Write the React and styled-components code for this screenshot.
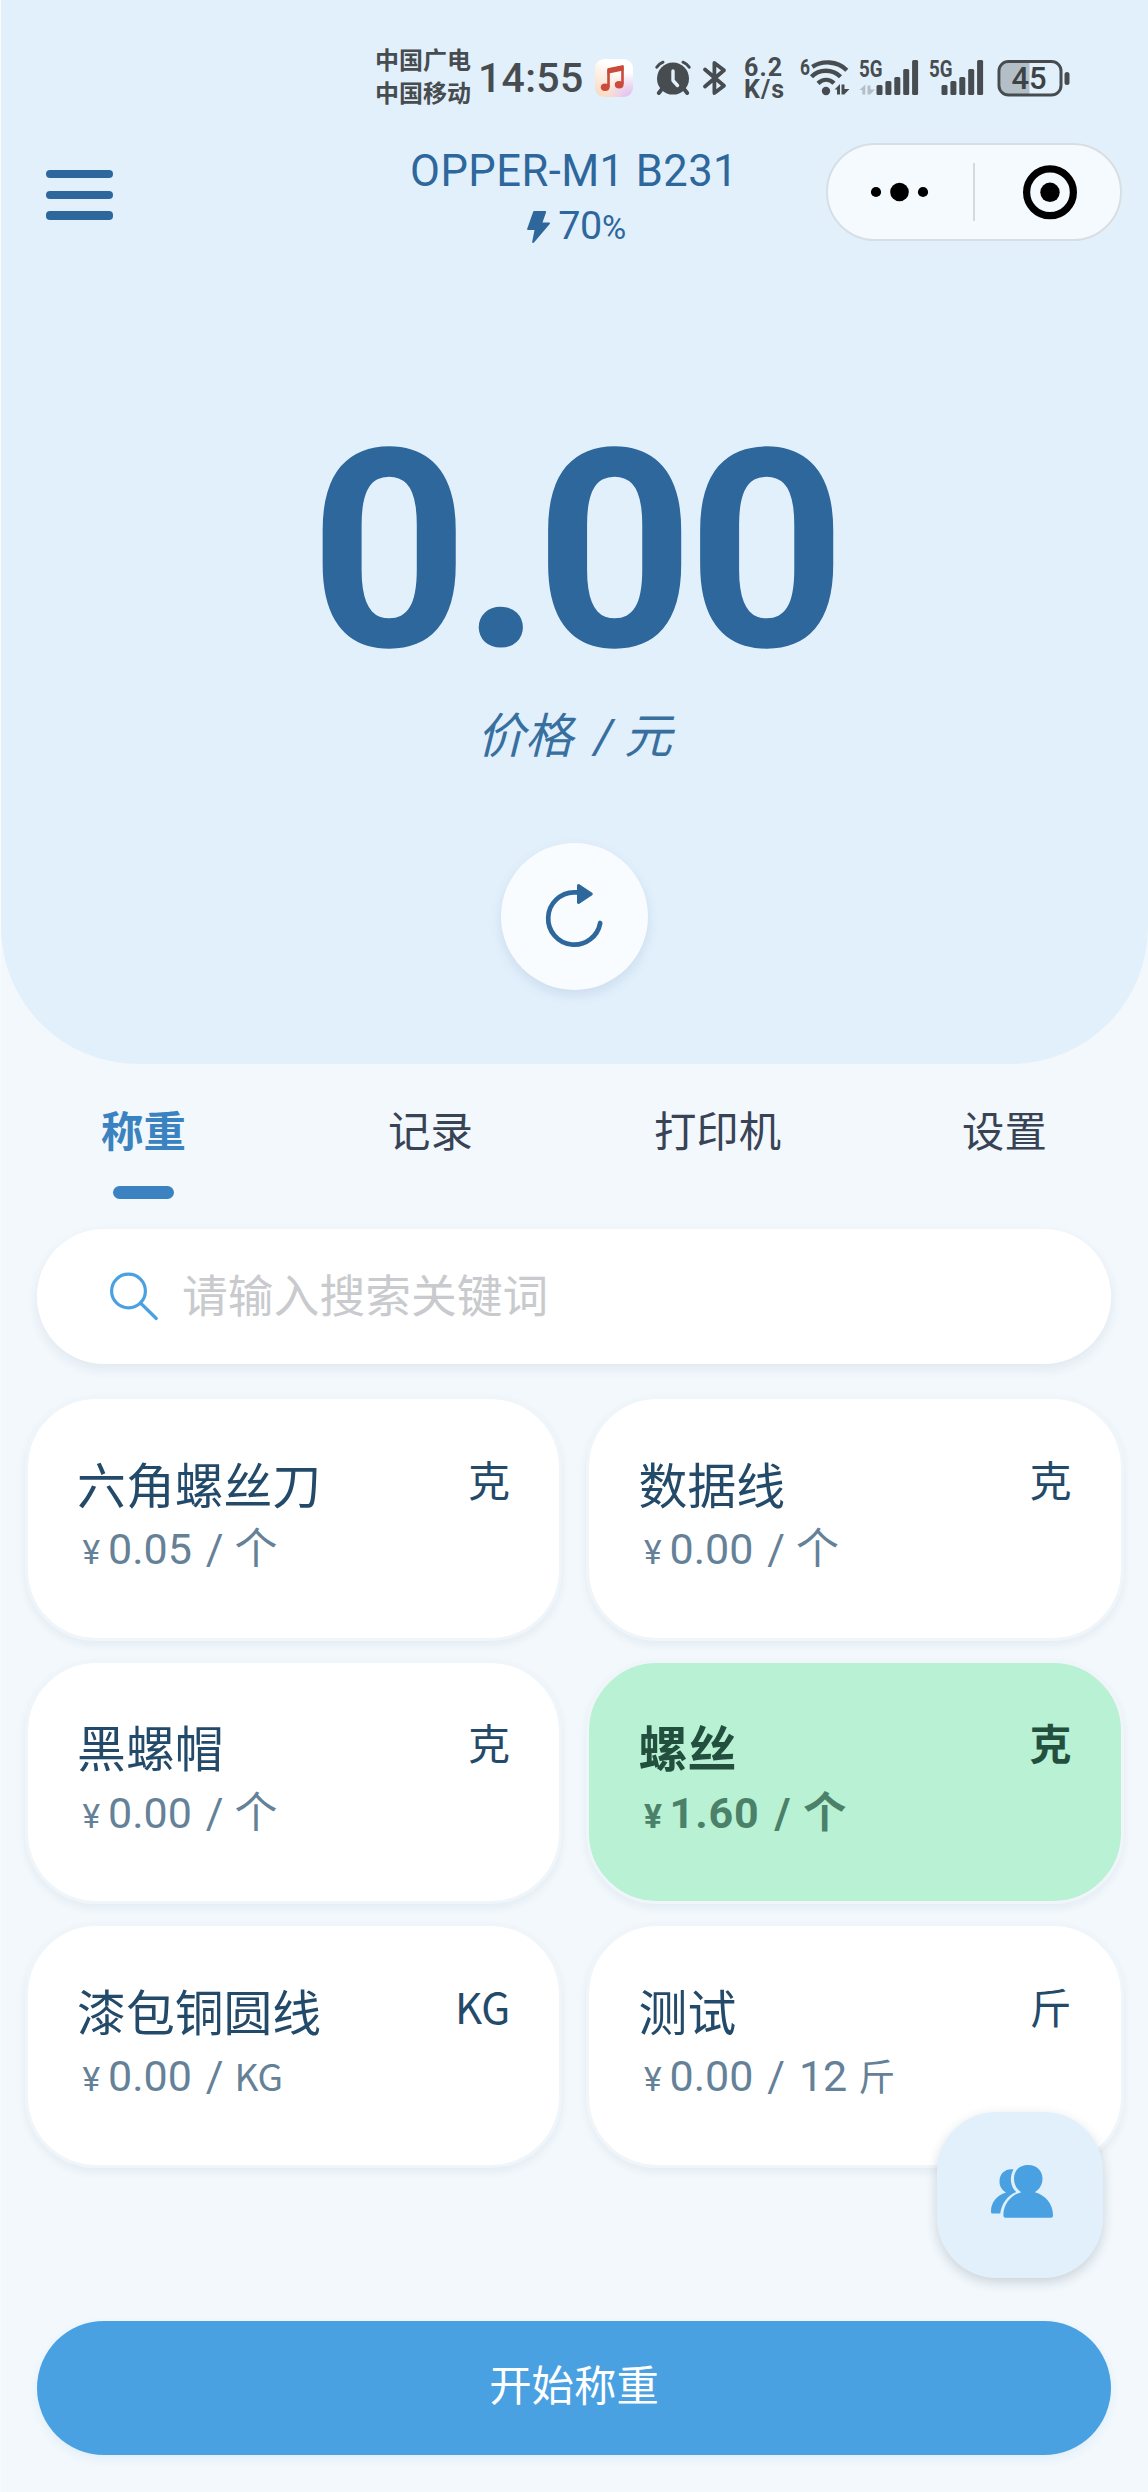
import React from 'react';
import styled, { createGlobalStyle, css } from 'styled-components';

const GlobalStyle = createGlobalStyle`
    * {
        box-sizing: border-box;
    }
    body {
        margin: 0;
        background: #f2f8fd;
        font-family: Roboto, "Noto Sans CJK SC", sans-serif;
    }
`

const Page = styled.div`
    position: relative;
    display: flex;
    flex-direction: column;
    width: 1148px;
    height: 2492px;
    overflow: hidden;
    border-left: 1px solid #f7fbfe;
    background: #f2f8fc;
`

const Hero = styled.header`
    display: flex;
    flex-direction: column;
    align-items: center;
    height: 1064px;
    background: #e2f0fc;
    border-radius: 0 0 137px 137px;
`

const StatusBar = styled.div`
    display: flex;
    align-items: center;
    width: 100%;
    height: 118px;
    padding: 38px 0 0 374px;
    color: #464c4f;
    svg {
        display: block;
        flex: none;
        overflow: visible;
    }
`

const StatusGap = styled.span`
    flex: none;
    width: ${({ $width }) => $width}px;
`

const Carrier = styled.div`
    width: 103px;
    font-size: 24px;
    font-weight: 700;
    line-height: 33px;
    white-space: nowrap;
`

const Clock = styled.div`
    width: 117px;
    font-size: 41px;
    font-weight: 500;
    letter-spacing: 0.3px;
    line-height: 48px;
`

const Speed = styled.div`
    width: 56px;
    margin-left: 17px;
    padding-top: 1px;
    font-size: 25px;
    font-weight: 700;
    letter-spacing: 1.1px;
    line-height: 22px;
`

const NavBar = styled.div`
    display: grid;
    grid-template-columns: 321px 504px 322px;
    width: 100%;
    height: 148px;
`

const MenuButton = styled.button`
    display: flex;
    flex-direction: column;
    gap: 12.3px;
    width: 67px;
    margin: 52px 0 0 45px;
    padding: 0;
    border: 0;
    background: none;
    span {
        height: 8.4px;
        border-radius: 4px;
        background: #2d679b;
    }
`

const Device = styled.div`
    padding-top: 28.5px;
    color: #2d679b;
    text-align: center;
    h1 {
        margin: 0;
        font-size: 43.5px;
        font-weight: 400;
        line-height: 50px;
        letter-spacing: 0.45px;
    }
`

const Battery = styled.div`
    display: flex;
    align-items: center;
    justify-content: center;
    gap: 8px;
    margin-top: 4.5px;
    padding-left: 5px;
    font-size: 39.5px;
    line-height: 50px;
    letter-spacing: -0.3px;
    small {
        font-size: 33px;
    }
`

const Capsule = styled.div`
    width: 296px;
    height: 98px;
    margin-top: 25px;
    border: 2px solid #d7dfe5;
    border-radius: 49px;
    background: #f5fafe;
    svg {
        display: block;
    }
`

const Reading = styled.div`
    margin-top: 123.5px;
    color: #2d679b;
    font-size: 277px;
    font-weight: 700;
    line-height: 324px;
    letter-spacing: -6.9px;
`

const ReadingLabel = styled.div`
    margin-top: -11.5px;
    color: #376f9f;
    font-size: 48px;
    font-style: italic;
    line-height: 70px;
    word-spacing: 4px;
    span {
        margin: 0 -5px 0 5px;
    }
`

const RefreshButton = styled.button`
    width: 147px;
    height: 147px;
    margin-top: 71px;
    padding: 0;
    border: 0;
    border-radius: 50%;
    background: #f8fcff;
    box-shadow: 0 5px 12px rgba(60, 90, 130, 0.13);
    svg {
        display: block;
    }
`

const Tabs = styled.nav`
    display: grid;
    grid-template-columns: repeat(4, 287px);
    height: 165px;
    margin-left: -1px;
    padding-top: 38px;
`

const Tab = styled.a`
    display: flex;
    flex-direction: column;
    align-items: center;
    color: ${({ $active }) => ($active ? '#3a82c0' : '#394356')};
    font-size: 42.4px;
    font-weight: ${({ $active }) => ($active ? 700 : 400)};
    line-height: 62px;
    &::after {
        content: "";
        display: ${({ $active }) => ($active ? 'block' : 'none')};
        width: 61px;
        height: 13px;
        margin-top: 22px;
        border-radius: 6.5px;
        background: #3a82c0;
    }
`

const SearchBox = styled.label`
    display: flex;
    align-items: center;
    gap: 23px;
    height: 135px;
    margin: 0 37px 0 36px;
    padding-left: 72px;
    border-radius: 67px;
    background: #fff;
    box-shadow: 0 5px 12px rgba(50, 80, 110, 0.09);
    input {
        flex: 1;
        padding: 1px 0 0;
        border: 0;
        outline: 0;
        background: none;
        font-family: inherit;
        font-size: 45.8px;
    }
    input::placeholder {
        color: #c8cacd;
        opacity: 1;
    }
`

const Goods = styled.main`
    display: grid;
    grid-template-columns: 537.5px 537.5px;
    grid-auto-rows: 244.7px;
    gap: 19px 24px;
    margin: 32px 0 0 23.6px;
`

const selectedCard = css`
    background: #b8f1d3;
    color: #234f3f;
    font-weight: 700;
`

const Card = styled.article`
    padding: 53.5px 49px 0 49.5px;
    border: 3px solid #f0f5fa;
    border-radius: 71px;
    background: #fff;
    background-clip: padding-box;
    box-shadow: 0 4px 8px rgba(50, 80, 110, 0.07);
    color: #244a6a;
    ${({ $selected }) => $selected && selectedCard}
`

const CardTop = styled.div`
    display: flex;
    justify-content: space-between;
    height: 67.5px;
    h2 {
        margin: 0;
        font-size: 48.8px;
        font-weight: inherit;
        line-height: 70px;
    }
    span {
        margin-top: -5px;
        font-family: "Noto Sans CJK SC", sans-serif;
        font-size: 42px;
        line-height: 62px;
    }
`

const Price = styled.div`
    display: flex;
    align-items: baseline;
    color: ${({ $selected }) => ($selected ? '#4b8069' : '#648198')};
    font-size: 43px;
    letter-spacing: ${({ $selected }) => ($selected ? '0.9px' : '0')};
    line-height: 58px;
    white-space: pre;
    word-spacing: 3.2px;
    .currency {
        width: 31px;
        padding-left: 5.5px;
        font-size: 33.5px;
    }
    .unit {
        margin-left: -3px;
        font-family: "Noto Sans CJK SC", sans-serif;
        font-size: ${({ $small }) => ($small ? '37px' : '43px')};
        line-height: 40px;
    }
`

const ContactButton = styled.button`
    position: absolute;
    left: 936px;
    top: 2112px;
    width: 166px;
    height: 166px;
    padding: 0;
    border: 0;
    border-radius: 60px;
    background: #e2f0fc;
    box-shadow: 0 4px 12px rgba(40, 60, 80, 0.2);
    svg {
        display: block;
    }
`

const StartButton = styled.button`
    height: 134px;
    margin: auto 37px 37px 36px;
    padding: 0 0 12px;
    border: 0;
    border-radius: 67px;
    background: #4aa1e2;
    box-shadow: 0 4px 8px rgba(74, 161, 226, 0.1);
    color: #fff;
    font-family: inherit;
    font-size: 42.4px;
`

const goods = [
    { name: '六角螺丝刀', unit: '克', price: '0.05', per: '', perUnit: '个' },
    { name: '数据线', unit: '克', price: '0.00', per: '', perUnit: '个' },
    { name: '黑螺帽', unit: '克', price: '0.00', per: '', perUnit: '个' },
    { name: '螺丝', unit: '克', price: '1.60', per: '', perUnit: '个', selected: true },
    { name: '漆包铜圆线', unit: 'KG', price: '0.00', per: '', perUnit: 'KG', small: true },
    { name: '测试', unit: '斤', price: '0.00', per: '12 ', perUnit: '斤', small: true },
]

const barTops = [26, 22, 18, 10, 1]

function MusicIcon() {
    return (
        <svg width="38" height="38" viewBox="0 0 38 38">
            <defs>
                <linearGradient id="music" x1="0.1" y1="0.9" x2="0.5" y2="0.2">
                    <stop offset="0" stopColor="#fbdcc6" />
                    <stop offset="1" stopColor="#fff" />
                </linearGradient>
                <radialGradient id="violet" cx="0.95" cy="1" r="0.65">
                    <stop offset="0" stopColor="#dfbdf5" />
                    <stop offset="1" stopColor="#dfbdf5" stopOpacity="0" />
                </radialGradient>
            </defs>
            <rect width="38" height="38" rx="9" fill="url(#music)" />
            <rect width="38" height="38" rx="9" fill="url(#violet)" />
            <path d="M13.5 28V11l14-3v17" fill="none" stroke="#cb4a3a" strokeWidth="2.6" strokeLinejoin="round" />
            <path d="M12.5 9.2l16-3.2v5.5l-16 3.3z" fill="#cb4a3a" />
            <ellipse cx="10.2" cy="28.3" rx="4.4" ry="3.7" fill="#cb4a3a" />
            <ellipse cx="24.2" cy="25.7" rx="4.4" ry="3.7" fill="#cb4a3a" />
        </svg>
    )
}

function AlarmIcon() {
    return (
        <svg width="36" height="36" viewBox="0 0 36 36">
            <g fill="none" stroke="#464c4f" strokeLinecap="round">
                <path d="M1.8 7.2A15 15 0 0 1 8 2.2M28 2.2a15 15 0 0 1 6.2 5" strokeWidth="3" />
                <path d="M7 29l-3.2 4M29 29l3.2 4" strokeWidth="4" />
            </g>
            <circle cx="18" cy="18.6" r="16" fill="#464c4f" />
            <path d="M18 11v9.5l4.5 5" fill="none" stroke="#e2f0fc" strokeWidth="3.4" strokeLinecap="round" strokeLinejoin="round" />
        </svg>
    )
}

function BluetoothIcon() {
    return (
        <svg width="24" height="36" viewBox="0 0 24 36">
            <path d="M2 9.5l19 16.2-9.6 7.3V3L21 10.3 2 26.5" fill="none" stroke="#464c4f" strokeWidth="3.8" strokeLinecap="round" strokeLinejoin="round" />
        </svg>
    )
}

function WifiIcon() {
    return (
        <svg width="54" height="42" viewBox="0 0 54 42">
            <text x="0" y="18" fontSize="22" fontWeight="700" fill="#464c4f" textLength="10" lengthAdjust="spacingAndGlyphs">6</text>
            <g fill="none" stroke="#464c4f" strokeWidth="4.4">
                <path d="M12.3 9.8C22 3.5 37 3.5 46.8 13.2" />
                <path d="M11.5 19.8c7.5-8 21-8 29 0" />
                <path d="M18 26.3c5-4.6 11.3-4.6 16 0" />
            </g>
            <circle cx="26" cy="34" r="4.2" fill="#464c4f" />
            <path d="M34.5 32.5l5.5-5.5v10.5h-3v-5zM41.5 27.5h3V32h5l-5.2 5.5h-2.8z" fill="#464c4f" />
        </svg>
    )
}

function SignalIcon({ shift, data }) {
    return (
        <svg width="70" height="38" viewBox="0 0 70 38">
            <text x="0" y="17.5" fontSize="23" fontWeight="700" fill="#464c4f" textLength="23.5" lengthAdjust="spacingAndGlyphs">5G</text>
            {data && <path d="M.5 31l5.8-5.5v10h-3V31zM8.500 26.500h3v4H16l-5 5H8.500z" fill="#b3bec7" />}
            {barTops.map((top, i) => (
                <rect key={top} x={shift + i * 8.9} y={top} width="6" height={36 - top} rx="1.5" fill="#464c4f" />
            ))}
        </svg>
    )
}

function BatteryIcon() {
    return (
        <svg width="74" height="37" viewBox="1.5 0 74 37">
            <path d="M11 3h21v31H11a8 8 0 0 1-8-8V11a8 8 0 0 1 8-8z" fill="#b3bec7" />
            <rect x="1.5" y="1.5" width="62" height="33.5" rx="9.5" fill="none" stroke="#464c4f" strokeWidth="3" />
            <rect x="67" y="12" width="5" height="13" rx="2.5" fill="#464c4f" />
            <text x="31.5" y="29.3" fontSize="31" fontWeight="500" fill="#3c4245" textAnchor="middle">45</text>
        </svg>
    )
}

function CapsuleIcon() {
    return (
        <svg width="292" height="94" viewBox="0 0 292 94">
            <circle cx="48" cy="47" r="5.1" />
            <circle cx="71.5" cy="47" r="9.3" />
            <circle cx="95" cy="47" r="5.1" />
            <path d="M146 18v58" stroke="#d5dadd" strokeWidth="2" />
            <circle cx="222" cy="47.3" r="23.4" fill="none" stroke="#000" strokeWidth="7.2" />
            <circle cx="222" cy="47.3" r="9.7" />
        </svg>
    )
}

function RefreshIcon() {
    return (
        <svg width="147" height="147" viewBox="0 0 147 147">
            <path d="M76 49.300h-3a26.200 26.200 0 1 0 26.200 30.700" fill="none" stroke="#2d679b" strokeWidth="4.7" strokeLinecap="round" />
            <path d="M77.5 42.5L90.3 51 77.5 59.5z" fill="#2d679b" stroke="#2d679b" strokeWidth="3" strokeLinejoin="round" />
        </svg>
    )
}

function SearchIcon() {
    return (
        <svg width="50" height="50" viewBox="0 0 50 50" fill="none" stroke="#4aa1e2" strokeWidth="3.2" strokeLinecap="round">
            <circle cx="19.5" cy="19" r="16.9" />
            <path d="M31.5 31l15.800 15.500" />
        </svg>
    )
}

function PeopleIcon() {
    return (
        <svg width="166" height="166" viewBox="0 0 166 166" fill="#4aa1e2">
            <path d="M76.500 57.500c-8-1-14 4-14 12 0 5 2.500 8.500 6.500 11-9 2.500-15 10-15 18.500 0 2 .3 2.600 1.500 2.600h7.700c1.500-10 7-17.800 16-21.600-6-5.500-7-15.500-2.700-22.500z" />
            <path d="M91 53c9 0 14.500 6 14.500 13.500 0 6-3 10.700-7.700 13.700C108.500 83 116 92 116 103c0 2-.4 2.700-2 2.700H68.500c-1.600 0-2.100-.7-2.100-2.700 0-11 7.800-20 17.900-22.800-4.700-3-7.300-7.700-7.300-13.700C77 59 82 53 91 53z" />
        </svg>
    )
}

export default function App() {
    return (
        <Page>
            <GlobalStyle />
            <Hero>
                <StatusBar>
                    <Carrier>中国广电<br />中国移动</Carrier>
                    <Clock>14:55</Clock>
                    <MusicIcon />
                    <StatusGap $width={22} />
                    <AlarmIcon />
                    <StatusGap $width={12} />
                    <BluetoothIcon />
                    <Speed>6.2<br />K/s</Speed>
                    <WifiIcon />
                    <StatusGap $width={5} />
                    <SignalIcon shift={17.5} data />
                    <SignalIcon shift={12.5} />
                    <BatteryIcon />
                </StatusBar>
                <NavBar>
                    <MenuButton aria-label="menu"><span /><span /><span /></MenuButton>
                    <Device>
                        <h1>OPPER-M1 B231</h1>
                        <Battery>
                            <svg width="23" height="32" viewBox="0 0 23 32" fill="#2d679b">
                                <path d="M7.500 0h10.500c1 0 1.300.5 1 1.400L15.500 11.500H22c1 0 1.300.7.700 1.600L7 31.500c-1 1-2 .5-1.800-.7L7.500 19H1.200C.2 19 0 18.500.2 17.700L6 1.200C6.300.3 6.700 0 7.500 0z" />
                            </svg>
                            <span>70<small>%</small></span>
                        </Battery>
                    </Device>
                    <Capsule><CapsuleIcon /></Capsule>
                </NavBar>
                <Reading>0.00</Reading>
                <ReadingLabel>价格 <span>/</span> 元</ReadingLabel>
                <RefreshButton aria-label="refresh"><RefreshIcon /></RefreshButton>
            </Hero>
            <Tabs>
                <Tab $active>称重</Tab>
                <Tab>记录</Tab>
                <Tab>打印机</Tab>
                <Tab>设置</Tab>
            </Tabs>
            <SearchBox>
                <SearchIcon />
                <input type="text" placeholder="请输入搜索关键词" />
            </SearchBox>
            <Goods>
                {goods.map((item) => (
                    <Card key={item.name} $selected={item.selected}>
                        <CardTop>
                            <h2>{item.name}</h2>
                            <span>{item.unit}</span>
                        </CardTop>
                        <Price $selected={item.selected} $small={item.small}>
                            <span className="currency">¥</span>
                            <span>{item.price} / {item.per}</span>
                            <span className="unit">{item.perUnit}</span>
                        </Price>
                    </Card>
                ))}
            </Goods>
            <StartButton>开始称重</StartButton>
            <ContactButton aria-label="contacts"><PeopleIcon /></ContactButton>
        </Page>
    )
}
